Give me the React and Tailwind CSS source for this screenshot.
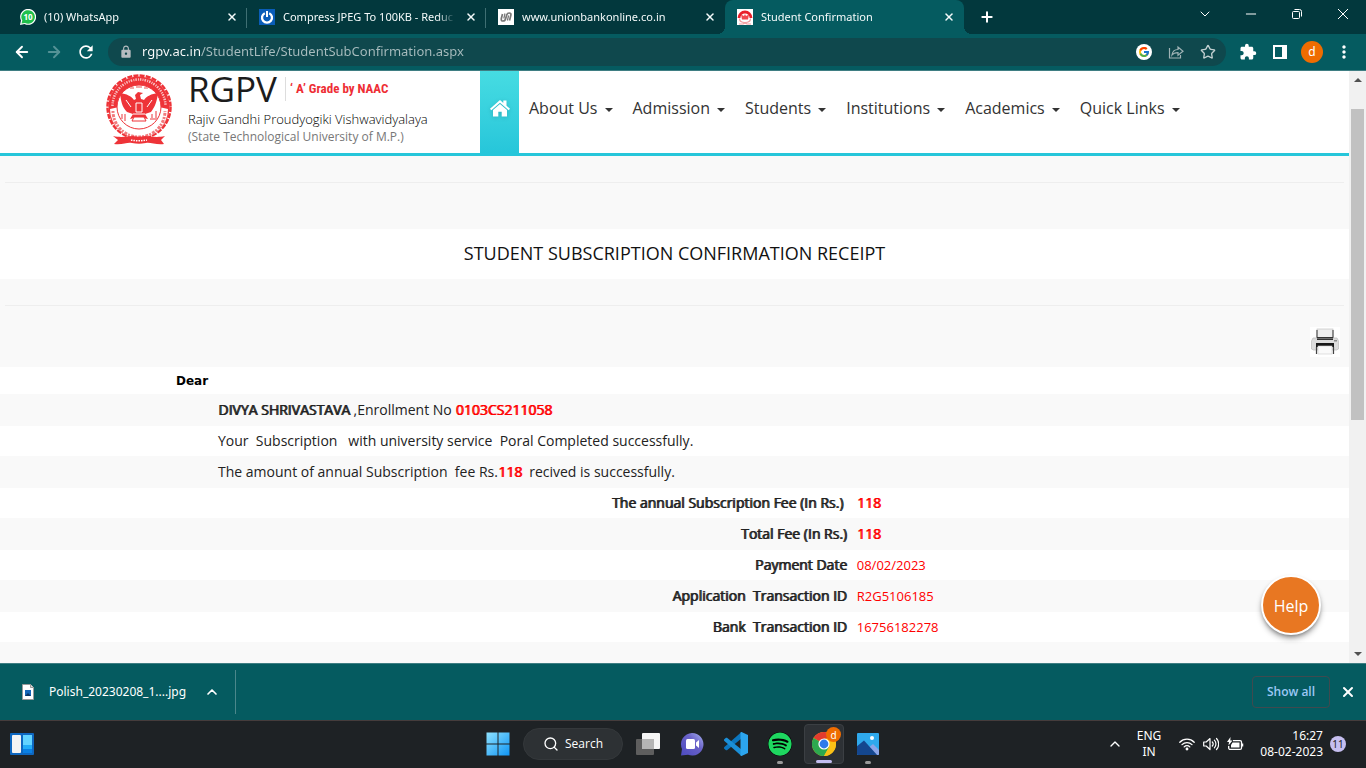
import { ArrowLeft, ArrowRight, X, Plus, ChevronDown, ChevronUp, Minus, Search, Star } from "lucide-react";
import { FcGoogle } from "react-icons/fc";
import { FaSpotify } from "react-icons/fa";
import { MdExtension, MdLock, MdMoreVert, MdRefresh } from "react-icons/md";

const UI = "font-['Noto_Sans','Open_Sans',sans-serif]";

function WhatsAppIcon() {
  return (
    <svg viewBox="0 0 16 16" className="size-4 shrink-0" aria-hidden="true">
      <path d="M0 16 1 11.5A8 8 0 1 1 4.500 15Z" fill="#fff" />
      <path d="M1.500 14.500 2.300 11.500A6.800 6.800 0 1 1 5 14Z" fill="#1fc04c" />
      <text x="8" y="11" fontSize="8" fontWeight="700" fill="#fff" textAnchor="middle" fontFamily="Open Sans">10</text>
    </svg>
  );
}

function PowerIcon() {
  return (
    <svg viewBox="0 0 16 16" className="size-4 shrink-0" aria-hidden="true">
      <rect width="16" height="16" fill="#0a5db8" />
      <path d="M5.800 4.200A5 5 0 1 0 10.200 4.200" fill="none" stroke="#fff" strokeWidth="2.300" />
      <path d="M8 2v6" stroke="#fff" strokeWidth="2" />
    </svg>
  );
}

function UnionIcon() {
  return (
    <svg viewBox="0 0 16 16" className="size-4 shrink-0" aria-hidden="true">
      <rect width="16" height="16" fill="#fff" />
      <path d="M4.500 5 3.400 9.200C2.900 11.500 3.800 12 5 12c1.500 0 2.300-1 2.600-2.300L8.800 5.800C9.200 4.500 10 4 11.200 4c1.600 0 2 1.100 1.600 2.500L11.500 11.500" fill="none" stroke="#777" strokeWidth="1.700" />
      <path d="M7 4.500 5.800 9.500M10.600 6.500 9.400 11.500" fill="none" stroke="#777" strokeWidth="1.200" />
    </svg>
  );
}

function SealIcon() {
  return (
    <svg viewBox="0 0 16 16" className="size-4 shrink-0" aria-hidden="true">
      <rect width="16" height="16" fill="#fff" />
      <path d="M2 9A6 6 0 0 1 14 9" fill="none" stroke="#e8202a" strokeWidth="2.800" />
      <path d="M4 5.500 7 7l1-2 1 2 3-1.500-1 5H5Z" fill="#f0484f" />
      <path d="M2.500 9.500c0 2.500 2.500 4 5.500 4s5.500-1.500 5.500-4M2 15h4l2-1 2 1h4" fill="none" stroke="#f49a9d" strokeWidth="1.200" />
    </svg>
  );
}

function Seal() {
  return (
    <svg viewBox="0 0 66 72" className="mt-0.5 h-[72px] w-[66px] shrink-0" role="img" aria-label="RGPV seal">
      <circle cx="33" cy="34" r="31.500" fill="none" stroke="#ee3338" strokeWidth="2.500" strokeDasharray="5 1.200" />
      <circle cx="33" cy="34" r="30.500" fill="#ee3338" />
      <path d="M4 36A29 29 0 0 0 62 36L53 34A20 20 0 0 1 13 34Z" fill="#fff" />
      <path d="M7 38A26 26 0 0 0 59 38" fill="none" stroke="#f17a7d" strokeWidth="3" strokeDasharray="2 1.300 3 1" />
      <path d="M6.500 33A26.500 26.500 0 0 1 59.500 33" fill="none" stroke="#fff" strokeOpacity=".7" strokeWidth="2.500" strokeDasharray="1.500 1.200 1 1" />
      <circle cx="33" cy="34" r="22" fill="#fff" stroke="#ee3338" strokeWidth="1" />
      <path d="M24 15h4M30 14h6M38 15h4" stroke="#f08a8c" strokeWidth="1.500" />
      <path d="M14 20c7 1 11 3 14 7l2-1-1-4 3-3 5 1-3 2 1 4 3 1c3-4 7-6 14-7-1 8-3 14-7 19l-6 2 3 5-9-2-9 2 3-5-6-2c-5-5-6-11-7-19Z" fill="#ee3338" />
      <path d="M30 30h6v9h-6z" fill="#ee3338" stroke="#fff" strokeWidth="1" />
      <path d="M27 41h12M20 27l5 7M46 27l-5 7" fill="none" stroke="#fff" strokeWidth="1" />
      <path d="M28 44h10l2 4H26Z" fill="#fff" stroke="#ee3338" strokeWidth="1" />
      <path d="M16 41v5M19 41v7M46 41v4M50 38v7M44 46h7" stroke="#f17a7d" strokeWidth="1.500" />
      <path d="M7 63c9 2 15 0 20 0 4 1 8 1 12 0 5 0 11 2 20 0l-4 4 3 4c-8 1-14-2-18-1-5 1-9 1-14 0-5-1-9 2-18 1l4-4Z" fill="#ee3338" />
      <path d="M25 67c5 1 11 1 16 0" fill="none" stroke="#fff" strokeWidth="1.500" strokeDasharray="1.500 1" />
    </svg>
  );
}

function HomeGlyph() {
  return (
    <svg viewBox="0 0 20 17" className="h-[17px] w-5 drop-shadow-sm" aria-hidden="true">
      <path d="M10 0 0 8.700 1.300 10.200 10 2.700 18.700 10.200 20 8.700 16.500 5.700V.5h-3.200v2.400Z" fill="#fff" />
      <path d="M10 4 3 10v6.500h5.300v-4.700h3.400v4.700H17V10Z" fill="#fff" />
    </svg>
  );
}

function PrinterIcon() {
  return (
    <svg viewBox="0 0 30 30" className="size-[30px]" aria-hidden="true">
      <rect width="30" height="30" fill="#fff" />
      <rect x="7" y="2" width="16" height="10" fill="#eee" stroke="#bbb" strokeWidth=".6" />
      <path d="M7 3v9M23 3v9" stroke="#555" strokeWidth="1.200" />
      <path d="M3 11h24l1.500 3v8l-2 1H3.500l-2-1v-8Z" fill="#ddd" stroke="#bbb" strokeWidth=".7" />
      <rect x="7" y="10" width="16" height="3" fill="#333" />
      <path d="M7 11.500h16" stroke="#999" strokeWidth=".6" />
      <rect x="6" y="16" width="18" height="4" fill="#181818" />
      <rect x="8" y="19" width="14" height="8" fill="#fafafa" stroke="#ccc" strokeWidth=".6" />
      <path d="M6.500 20v7M23.500 20v7" stroke="#444" strokeWidth="1.200" />
      <rect x="24" y="13" width="3" height="1.500" fill="#888" />
    </svg>
  );
}

const tabs = [
  { title: "(10) WhatsApp", Icon: WhatsAppIcon, divider: true },
  { title: "Compress JPEG To 100KB - Reduc", Icon: PowerIcon, divider: true },
  { title: "www.unionbankonline.co.in", Icon: UnionIcon },
  { title: "Student Confirmation", Icon: SealIcon, active: true },
];

function Tab({ title, Icon, divider, active }) {
  return (
    <div className={`relative flex h-[34px] w-[239px] min-w-0 items-center gap-2 pl-3 pr-[7px] ${active ? "rounded-t-lg bg-[#055b60]" : ""}`}>
      {active && (
        <>
          <span className="absolute bottom-0 right-full size-2 bg-[radial-gradient(circle_at_0_0,transparent_8px,#055b60_8px)]" />
          <span className="absolute bottom-0 left-full size-2 bg-[radial-gradient(circle_at_100%_0,transparent_8px,#055b60_8px)]" />
        </>
      )}
      <Icon />
      <span className="min-w-0 flex-1 overflow-hidden whitespace-nowrap [mask-image:linear-gradient(to_right,#000_90%,transparent)]">{title}</span>
      <button aria-label={`Close ${title}`} className="flex size-4 shrink-0 items-center justify-center">
        <X className="size-3" strokeWidth={3} />
      </button>
      {divider && <span className="absolute right-0 top-2 h-5 w-px bg-[#3f6f73]" />}
    </div>
  );
}

function TabStrip() {
  return (
    <div className="flex h-[34px] shrink-0 items-center bg-[#02383d] pl-2 text-[11px] text-[#f4fafa]">
      {tabs.map((t) => (
        <Tab key={t.title} {...t} />
      ))}
      <button aria-label="New tab" className="ml-[13px] flex size-5 shrink-0 items-center justify-center text-white">
        <Plus className="size-4" strokeWidth={3} />
      </button>
      <div className="ml-auto flex h-full shrink-0 pb-1.5 text-white">
        <button aria-label="Search tabs" className="flex w-[46px] items-center justify-center">
          <ChevronDown className="size-4" strokeWidth={1.5} />
        </button>
        <button aria-label="Minimize" className="flex w-[46px] items-center justify-center">
          <Minus className="size-4" strokeWidth={1.5} />
        </button>
        <button aria-label="Restore" className="flex w-[46px] items-center justify-center">
          <svg viewBox="0 0 10 10" className="size-2.5 overflow-visible" fill="none" stroke="currentColor" aria-hidden="true">
            <rect x=".5" y="2.500" width="7" height="7" rx="1" />
            <path d="M2.500 .5h5a2 2 0 0 1 2 2v5" />
          </svg>
        </button>
        <button aria-label="Close window" className="flex w-[46px] items-center justify-center">
          <svg viewBox="0 0 10 10" className="size-2.5" stroke="currentColor" aria-hidden="true">
            <path d="m0 0 10 10M10 0 0 10" />
          </svg>
        </button>
      </div>
    </div>
  );
}

function Toolbar() {
  const slot = "flex w-8 shrink-0 items-center justify-center";
  return (
    <div className="flex h-[37px] shrink-0 items-center border-b border-[#3f7e83] bg-[#055b60] px-1.5 text-white">
      <button aria-label="Back" className={slot}><ArrowLeft className="size-[18px]" strokeWidth={2.500} /></button>
      <button aria-label="Forward" className={slot}><ArrowRight className="size-[18px] text-[#559296]" strokeWidth={2.500} /></button>
      <button aria-label="Reload" className={slot}><MdRefresh className="size-5" /></button>
      <div className="ml-1.5 flex h-7 min-w-0 flex-1 items-center rounded-full bg-[#0f484d] pl-[11px] pr-0.5">
        <MdLock className="mr-[9px] size-3.5 shrink-0 text-[#b5bcc0]" />
        <input
          aria-label="Address"
          readOnly
          value="rgpv.ac.in/StudentLife/StudentSubConfirmation.aspx"
          className="min-w-0 flex-1 bg-[linear-gradient(to_right,#fff_59px,#a9bdbf_59px)] bg-clip-text text-[13px] text-transparent outline-none"
        />
        <button aria-label="Google Lens" className={slot}><FcGoogle className="size-4 rounded-full bg-white p-0.5" /></button>
        <button aria-label="Share" className={slot}>
          <svg viewBox="0 0 16 16" className="size-4" fill="none" stroke="#9fb3b5" strokeWidth="1.200" aria-hidden="true">
            <path d="M1.500 4v10h11v-3M4 11c.5-4 3-5.500 6-5.500V3l5 4.200-5 4V8.700C7.500 8.700 5.500 9 4 11Z" />
          </svg>
        </button>
        <button aria-label="Bookmark" className={slot}><Star className="size-4 text-[#c3d0d1]" /></button>
      </div>
      <button aria-label="Extensions" className={slot + " ml-1.5"}><MdExtension className="size-[18px]" /></button>
      <button aria-label="Side panel" className={slot}>
        <svg viewBox="0 0 14 14" className="size-3.5" aria-hidden="true">
          <path d="M0 0h14v14H0ZM2 2v10h7V2Z" fill="#fff" fillRule="evenodd" />
        </svg>
      </button>
      <button aria-label="Profile" className={slot}>
        <span className="flex size-[22px] items-center justify-center rounded-full bg-[#ef6c00] text-xs">d</span>
      </button>
      <button aria-label="Menu" className={slot}><MdMoreVert className="size-5" /></button>
    </div>
  );
}

const menu = ["About Us", "Admission", "Students", "Institutions", "Academics", "Quick Links"];

function SiteHeader() {
  return (
    <header className="flex h-[85px] border-b-[3px] border-[#26c6da] bg-white pl-[106px]">
      <div className="flex w-[374px] shrink-0 gap-4">
        <Seal />
        <div className="whitespace-nowrap">
          <div className="flex h-[39px] items-start">
            <span className="text-[35px] leading-9 text-[#1c1c1c]">RGPV</span>
            <span className="ml-2 mt-1.5 h-6 border-l border-[#ddd] pl-1 font-['Liberation_Sans_Narrow','Roboto_Condensed',sans-serif] text-[13px] font-bold leading-6 text-[#ee2e35]">‘ A’ Grade by NAAC</span>
          </div>
          <p className="text-[13px] font-light leading-[18px] text-black">Rajiv Gandhi Proudyogiki Vishwavidyalaya</p>
          <p className="text-xs leading-[18px] text-[#777]">(State Technological University of M.P.)</p>
        </div>
      </div>
      <nav className="flex">
        <a href="#home" aria-label="Home" className="flex w-[39px] items-center justify-center bg-linear-to-b from-[#46dce2] to-[#26c6da] pb-2">
          <HomeGlyph />
        </a>
        {menu.map((m) => (
          <a key={m} href="#menu" className="flex items-center whitespace-nowrap px-2.5 pb-2 text-base text-[#333]">
            {m}
            <span className="ml-[7px] mt-1 border-x-4 border-t-4 border-x-transparent border-t-[#333]" />
          </a>
        ))}
      </nav>
    </header>
  );
}

const fees = [
  ["The annual Subscription Fee (In Rs.)\u00a0", "118", true],
  ["Total Fee (In Rs.)", "118", true],
  ["Payment Date", "08/02/2023"],
  ["Application  Transaction ID", "R2G5106185"],
  ["Bank  Transaction ID", "16756182278"],
];

const BOLD = "[text-shadow:1px_0_0_currentColor]";

function Receipt() {
  return (
    <table className="w-full table-fixed border-collapse whitespace-pre text-sm text-[#222]">
      <colgroup>
        <col className="w-[63.14%]" />
        <col />
      </colgroup>
      <tbody>
        <tr className="h-[27px] bg-white">
          <td colSpan={2} className="pl-[176px] font-['DejaVu_Sans',sans-serif] text-xs font-bold text-black">Dear</td>
        </tr>
        <tr className="h-8">
          <td colSpan={2} className="pl-[218px]">
            <span className={BOLD}>DIVYA SHRIVASTAVA</span> ,Enrollment No <span className={"text-[#f00] " + BOLD}>0103CS211058</span>
          </td>
        </tr>
        <tr className="h-[30px] bg-white">
          <td colSpan={2} className="pl-[218px]">{"Your  Subscription   with university service  Poral Completed successfully."}</td>
        </tr>
        <tr className="h-8">
          <td colSpan={2} className="pl-[218px]">
            {"The amount of annual Subscription  fee Rs."}<span className={"text-[#f00] " + BOLD}>118</span>{"  recived is successfully."}
          </td>
        </tr>
        {fees.map(([label, value, strong], i) => (
          <tr key={label} className={i % 2 ? "h-8" : "h-[30px] bg-white"}>
            <th scope="row" className={"pr-[5px] text-right font-normal " + BOLD}>{label}</th>
            <td className={"pl-[5px] text-[#f00] " + (strong ? BOLD : "text-[13px]")}>{value}</td>
          </tr>
        ))}
      </tbody>
    </table>
  );
}

function Page() {
  return (
    <main className="relative flex min-h-0 flex-1 overflow-hidden bg-[#f9f9f9] font-['Open_Sans',sans-serif]">
      <div className="min-w-0 flex-1">
        <SiteHeader />
        <hr className="mx-[5px] mb-[46px] mt-[26px] border-[#eee]" />
        <h1 className="bg-white pb-0.5 text-center text-lg font-normal leading-[48px] text-[#111]">STUDENT SUBSCRIPTION CONFIRMATION RECEIPT</h1>
        <hr className="mx-[5px] mt-[26px] border-[#eee]" />
        <div className="flex justify-end pb-2.5 pr-[9px] pt-[21px]">
          <button aria-label="Print receipt" className="h-[30px]"><PrinterIcon /></button>
        </div>
        <Receipt />
      </div>
      <div className="flex w-[17px] shrink-0 flex-col items-center bg-[#f1f1f1] py-[7px]" aria-hidden="true">
        <span className="border-x-4 border-b-4 border-x-transparent border-b-[#505050]" />
        <span className="mb-auto mt-[27px] h-[311px] w-[13px] bg-[#c1c1c1]" />
        <span className="border-x-4 border-t-4 border-x-transparent border-t-[#505050]" />
      </div>
      <button className="absolute bottom-7 right-[45px] size-[60px] rounded-full border-2 border-white bg-[#e87722] pt-0.5 text-base text-white shadow-md shadow-black/40">Help</button>
    </main>
  );
}

function DownloadBar() {
  return (
    <div className="flex h-[57px] shrink-0 items-center border-t border-[#3f7e83] bg-[#055b60] pr-2.5 text-xs text-white">
      <svg viewBox="0 0 12 16" className="ml-[22px] h-4 w-3" aria-hidden="true">
        <path d="M.5.5h8l3 3v12H.5Z" fill="#fff" stroke="#999" />
        <path d="M8.500.5v3h3" fill="#ddd" stroke="#999" />
        <rect x="3" y="6" width="6" height="6" fill="#1666b8" />
        <path d="m3 12 3-3 3 3Z" fill="#0b3565" />
      </svg>
      <button className="ml-[15px]">Polish_20230208_1....jpg</button>
      <button aria-label="Download options" className="ml-[18px]"><ChevronUp className="size-4" strokeWidth={2.500} /></button>
      <span className="ml-[15px] h-11 w-px bg-[#4b878b]" />
      <button className="ml-auto h-8 w-[78px] rounded border border-[#3f4a4f] font-['Open_Sans',sans-serif] font-semibold text-[#9cc8f5]">Show all</button>
      <button aria-label="Close downloads bar" className="ml-2.5"><X className="size-4" strokeWidth={3} /></button>
    </div>
  );
}

function StartIcon() {
  return (
    <svg viewBox="0 0 24 24" className="size-6" aria-hidden="true">
      <defs>
        <linearGradient id="start" x1="0" y1="0" x2="1" y2="1">
          <stop stopColor="#8fe2ff" />
          <stop offset="1" stopColor="#0f95f5" />
        </linearGradient>
      </defs>
      <path d="M.5.500H11.500V11.500H.5ZM12.500.5h11v11h-11ZM.5 12.500h11v11H.5ZM12.500 12.500h11v11h-11Z" fill="url(#start)" />
    </svg>
  );
}

function TaskViewIcon() {
  return (
    <svg viewBox="0 0 24 24" className="size-6" aria-hidden="true">
      <rect x="6" y="1" width="18" height="16" rx="1" fill="#f5f5f5" />
      <rect x="0" y="7" width="18" height="16" rx="1" fill="#5e5e5e" />
      <rect x="6" y="7" width="12" height="10" fill="#b5b5b5" />
    </svg>
  );
}

function ChatIcon() {
  return (
    <svg viewBox="0 0 24 24" className="size-6" aria-hidden="true">
      <defs>
        <linearGradient id="chat" x1="0" y1="1" x2="1" y2="0">
          <stop stopColor="#4c4bc0" />
          <stop offset=".6" stopColor="#6a62c8" />
          <stop offset="1" stopColor="#a8b4f0" />
        </linearGradient>
      </defs>
      <path d="M12 1A11.300 11.300 0 1 1 8 22.800L1 23.500 2 17A11.300 11.300 0 0 1 12 1Z" fill="url(#chat)" />
      <rect x="6" y="7" width="9" height="10" rx="1.500" fill="#fff" />
      <path d="m16 10.500 3-2.500v8l-3-2.500Z" fill="#fff" />
    </svg>
  );
}

function CodeIcon() {
  return (
    <svg viewBox="0 0 24 24" className="size-6" aria-hidden="true">
      <path d="M17.500 0v6.500L3 18.200l-1 .1-2-1.800.1-1.200Z" fill="#0b76bf" />
      <path d="M17.500 24v-6.500L3 5.800l-1-.1L0 7.500l.1 1.200Z" fill="#1b8fd8" />
      <path d="M17.500 0 24 3v18l-6.500 3c-.8 0-1-.5-1-1V1c0-.5.2-1 1-1Z" fill="#2ca5ee" />
    </svg>
  );
}

function ChromeIcon() {
  return (
    <svg viewBox="0 0 24 24" className="size-6" aria-hidden="true">
      <circle cx="12" cy="12" r="12" fill="#fbc116" />
      <path d="M12 12 1.600 6A12 12 0 0 1 22.400 6Z" fill="#e33b2e" />
      <path d="M1.600 6A12 12 0 0 0 12 24L17.200 15 12 12Z" fill="#2da94f" />
      <path d="M12 6.500h10.700A12 12 0 0 1 12 24L17 15Z" fill="#fbc116" />
      <circle cx="12" cy="12" r="5.600" fill="#fff" />
      <circle cx="12" cy="12" r="4.400" fill="#2f7bea" />
    </svg>
  );
}

function PhotosIcon() {
  return (
    <svg viewBox="0 0 24 24" className="size-6" aria-hidden="true">
      <clipPath id="frame"><rect x="1" y="1" width="22" height="22" rx="1" /></clipPath>
      <g clipPath="url(#frame)">
        <rect width="24" height="24" fill="#2fa9ec" />
        <path d="m11 17 6-5 7 7v5H11Z" fill="#8ba5e8" />
        <path d="M0 15 8 8.500 22 24H0Z" fill="#14478f" />
        <circle cx="16" cy="6" r="2" fill="#fff" />
      </g>
    </svg>
  );
}

function TaskButton({ label, children, active, running }) {
  return (
    <button
      aria-label={label}
      className={`relative flex size-10 items-center justify-center rounded ${active ? "border border-[#3b3f43] bg-[#2d3135]" : ""}`}
    >
      {children}
      {active && <span className="absolute bottom-0 h-[3px] w-4 rounded-full bg-[#c3bdf0]" />}
      {running && <span className="absolute bottom-0 h-[3px] w-1.5 rounded-full bg-[#9a9a9a]" />}
    </button>
  );
}

function Taskbar() {
  return (
    <footer className="grid h-12 shrink-0 grid-cols-[1fr_auto_1fr] items-center border-t border-[#453c3c] bg-[#1e2225] pb-px text-xs text-white">
      <button aria-label="Widgets" className="ml-2.5 w-6">
        <svg viewBox="0 0 24 22" className="h-[22px] w-6" aria-hidden="true">
          <rect width="24" height="22" rx="1" fill="#0e67c0" />
          <rect x="2" y="2" width="9" height="18" rx="1" fill="#f4f4f4" />
          <path d="M13 2h9v10h-9Z" fill="#63d4ff" />
          <path d="M13 12h9v4h-9Z" fill="#22adf8" />
          <path d="M13 16h9v4h-9Z" fill="#0a80e4" />
        </svg>
      </button>
      <div className="flex items-center gap-1">
        <TaskButton label="Start"><StartIcon /></TaskButton>
        <button className="mx-px flex h-8 w-[100px] items-center justify-center gap-1.5 rounded-full border border-[#34383b] bg-[#2d3134] font-['Open_Sans',sans-serif]">
          <Search className="size-4" />
          Search
        </button>
        <TaskButton label="Task view"><TaskViewIcon /></TaskButton>
        <TaskButton label="Chat"><ChatIcon /></TaskButton>
        <TaskButton label="Visual Studio Code"><CodeIcon /></TaskButton>
        <TaskButton label="Spotify" running>
          <FaSpotify className="size-6 rounded-full bg-black text-[#1ed760]" />
        </TaskButton>
        <TaskButton label="Chrome" active>
          <ChromeIcon />
          <span className="absolute right-0.5 top-0.5 flex size-[15px] items-center justify-center rounded-full bg-[#ef6c00] text-[10px] leading-none">d</span>
        </TaskButton>
        <TaskButton label="Photos" running><PhotosIcon /></TaskButton>
      </div>
      <div className="flex items-center justify-end pr-5">
        <button aria-label="Hidden icons" className="mr-3.5"><ChevronUp className="size-4" strokeWidth={2} /></button>
        <button className="mr-[18px] text-center leading-4">ENG<br />IN</button>
        <button aria-label="Network, volume and battery" className="mr-4 flex items-center gap-2">
          <svg viewBox="0 0 16 14" className="h-3.5 w-4" fill="none" stroke="#fff" strokeWidth="1.300" strokeLinecap="round" aria-hidden="true">
            <path d="M.8 5.200a10.200 10.200 0 0 1 14.400 0M3 7.600a7.100 7.100 0 0 1 10 0M5.200 9.900a4 4 0 0 1 5.600 0" />
            <circle cx="8" cy="12" r=".8" fill="#fff" />
          </svg>
          <svg viewBox="0 0 16 14" className="h-3.5 w-4" fill="none" stroke="#fff" strokeWidth="1.200" strokeLinejoin="round" strokeLinecap="round" aria-hidden="true">
            <path d="M.7 5v4h2.500l3.800 3.500v-11L3.200 5ZM9.300 5a3 3 0 0 1 0 4M11.400 3.200a5.500 5.500 0 0 1 0 7.600M13.500 1.500a8 8 0 0 1 0 11" />
          </svg>
          <svg viewBox="0 0 17 14" className="h-3.5 w-[17px]" fill="none" stroke="#fff" strokeWidth="1.300" aria-hidden="true">
            <path d="M6 3.600h7a1.500 1.500 0 0 1 1.500 1.500v5.800a1.500 1.500 0 0 1-1.500 1.500H3.200a1.500 1.500 0 0 1-1.500-1.500V9" />
            <path d="M5.500 5.500H12.500V10.500H4V8Z" fill="#fff" stroke="none" />
            <path d="M15.500 6.500v3" strokeWidth="1.500" />
            <path d="M3.500 0 0 5h2L1.500 8.500 5.500 3.500H3.300Z" fill="#fff" stroke="none" />
          </svg>
        </button>
        <button className="mr-[7px] text-right leading-4">16:27<br />08-02-2023</button>
        <button className="flex size-4 items-center justify-center rounded-full bg-[#c6bff0] text-[10px] leading-none text-[#222]">11</button>
      </div>
    </footer>
  );
}

export default function App() {
  return (
    <div className={`flex h-screen flex-col overflow-hidden ${UI}`}>
      <TabStrip />
      <Toolbar />
      <Page />
      <DownloadBar />
      <Taskbar />
    </div>
  );
}
